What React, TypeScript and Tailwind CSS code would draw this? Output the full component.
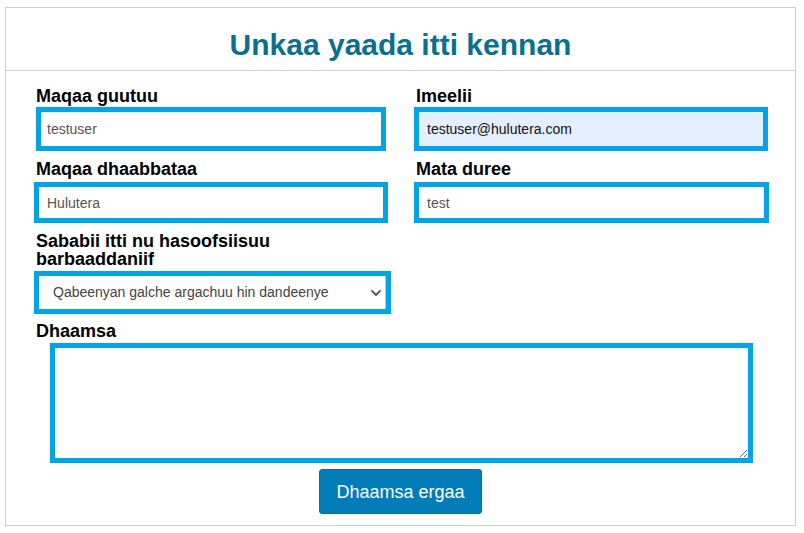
import React from "react";

const font = { fontFamily: '"Liberation Sans", Arial, sans-serif' };

export default function App() {
  return (
    <div className="pt-[7px] pl-[5px] bg-white" style={font}>
      <div className="w-[791px] h-[519px] border border-[#cccccc] bg-white">
        <div className="border-b border-[#cccccc] pt-[22px] pb-[10px]">
          <h1 className="text-center text-[30px] leading-[30px] font-bold text-[#0b6f8f]">
            Unkaa yaada itti kennan
          </h1>
        </div>
        <form className="pl-[28px] pt-[17px]" onSubmit={(e) => e.preventDefault()}>
          <div className="grid grid-cols-[357px_355px] gap-x-[23px]">
            <div className="flex flex-col">
              <label className="pl-[2px] text-[18px] leading-[17px] font-bold text-black mb-[2px]">Maqaa guutuu</label>
              <input
                defaultValue="testuser"
                className="ml-[2px] w-[350px] h-[44px] border-[5px] border-[#03a4e6] pl-[6px] text-[14px] text-[#555555] bg-white outline-none shadow-[inset_0_1px_1px_rgba(0,0,0,0.08)]"
              />
            </div>
            <div className="flex flex-col">
              <label className="pl-[2px] text-[18px] leading-[17px] font-bold text-black mb-[2px]">Imeelii</label>
              <input
                defaultValue="testuser@hulutera.com"
                className="w-[354px] h-[44px] border-[5px] border-[#03a4e6] pl-[8px] text-[14px] text-[#111111] bg-[#e4effd] outline-none"
              />
            </div>
            <div className="flex flex-col mt-[10px]">
              <label className="pl-[2px] text-[18px] leading-[17px] font-bold text-black mb-[4px]">Maqaa dhaabbataa</label>
              <input
                defaultValue="Hulutera"
                className="w-[354px] h-[41px] border-[5px] border-[#03a4e6] pl-[8px] text-[14px] text-[#555555] bg-white outline-none shadow-[inset_0_1px_1px_rgba(0,0,0,0.08)]"
              />
            </div>
            <div className="flex flex-col mt-[10px]">
              <label className="pl-[2px] text-[18px] leading-[17px] font-bold text-black mb-[4px]">Mata duree</label>
              <input
                defaultValue="test"
                className="w-[355px] h-[41px] border-[5px] border-[#03a4e6] pl-[8px] text-[14px] text-[#555555] bg-white outline-none shadow-[inset_0_1px_1px_rgba(0,0,0,0.08)]"
              />
            </div>
            <div className="flex flex-col mt-[9px]">
              <label className="pl-[2px] text-[18px] leading-[18px] font-bold text-black mb-[3px]">
                Sababii itti nu hasoofsiisuu barbaaddaniif
              </label>
              <div className="relative w-[357px] h-[43px] border-[5px] border-[#03a4e6] bg-white">
                <div className="w-full h-full border-r border-[#c8c8c8] flex items-center pl-[14px] pr-[24px]">
                  <select
                    defaultValue="a"
                    className="appearance-none flex-1 h-full text-[14px] text-[#444444] bg-transparent outline-none"
                    style={font}
                  >
                    <option value="a">Qabeenyan galche argachuu hin dandeenye</option>
                  </select>
                </div>
                <svg
                  className="absolute right-[5px] top-1/2 -translate-y-1/2 pointer-events-none"
                  width="10"
                  height="7"
                  viewBox="0 0 10 7"
                  fill="none"
                >
                  <path d="M1 1.5 L5 5.5 L9 1.5" stroke="#555555" strokeWidth="1.8" strokeLinecap="round" strokeLinejoin="round" />
                </svg>
              </div>
            </div>
            <div />
          </div>
          <div className="flex flex-col mt-[9px]">
            <label className="pl-[2px] text-[18px] leading-[17px] font-bold text-black mb-[3px]">Dhaamsa</label>
            <textarea
              className="ml-[16px] w-[703px] h-[120px] border-[5px] border-[#03a4e6] bg-white outline-none p-[6px] text-[14px]"
              style={font}
            />
          </div>
          <div className="flex justify-center mt-[6px] pr-[28px]">
            <button
              type="submit"
              className="w-[163px] h-[45px] rounded-[3px] bg-[#007cb9] text-white text-[18px] leading-none border border-[#0a6ea3]"
              style={font}
            >
              Dhaamsa ergaa
            </button>
          </div>
        </form>
      </div>
    </div>
  );
}
